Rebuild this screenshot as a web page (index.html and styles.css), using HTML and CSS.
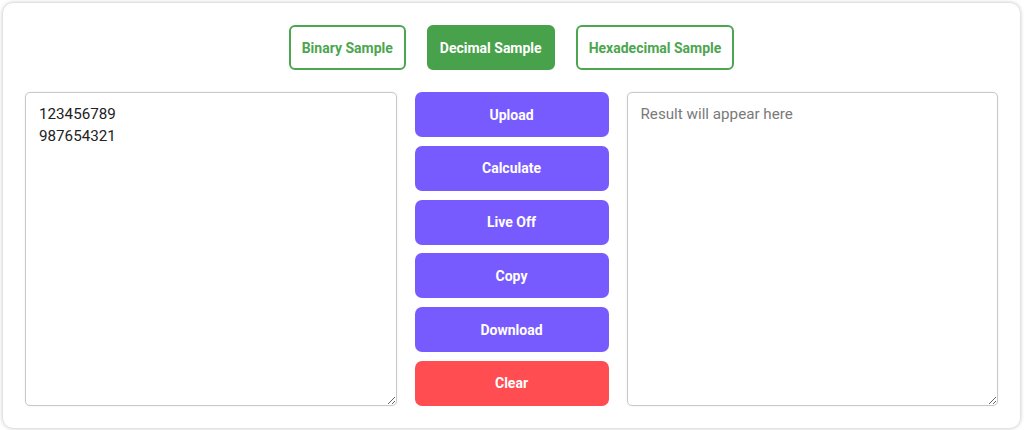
FILE: index.html
```html
<!DOCTYPE html>
<html lang="en">
<head>
<meta charset="utf-8">
<title>Converter</title>
<link rel="stylesheet" href="styles.css">
</head>
<body>
<div class="card">
  <div class="samples">
    <button class="sample">Binary Sample</button>
    <button class="sample active">Decimal Sample</button>
    <button class="sample">Hexadecimal Sample</button>
  </div>
  <div class="main">
    <textarea class="box">123456789
987654321</textarea>
    <div class="actions">
      <button class="act">Upload</button>
      <button class="act">Calculate</button>
      <button class="act">Live Off</button>
      <button class="act">Copy</button>
      <button class="act">Download</button>
      <button class="act clear">Clear</button>
    </div>
    <textarea class="box" placeholder="Result will appear here" readonly></textarea>
  </div>
</div>
</body>
</html>
```
FILE: styles.css
```css
* { box-sizing: border-box; }
html, body { margin: 0; background: #ffffff; }
body { padding: 3px 4px 2px 3px; font-family: Roboto, "Liberation Sans", sans-serif; }
.card {
  height: 425px;
  border-radius: 10px;
  background: #fff;
  box-shadow: 0 0 4px rgba(0, 0, 0, 0.28);
  padding: 22px 22px 22px 22px;
}
.samples {
  display: flex;
  justify-content: center;
  gap: 21px;
}
.sample {
  height: 45px;
  padding: 0 11px;
  border: 2px solid #4ca64f;
  border-radius: 6px;
  background: #fff;
  color: #4ca64f;
  font-family: Roboto, "Liberation Sans", sans-serif;
  font-weight: 700;
  font-size: 14px;
  cursor: pointer;
}
.sample.active {
  background: #48a14b;
  border-color: #48a14b;
  color: #fff;
}
.main {
  margin-top: 22px;
  display: grid;
  grid-template-columns: 1fr 194px 1fr;
  gap: 18px;
  height: 314px;
}
.box {
  width: 100%;
  height: 314px;
  border: 1px solid #c8c8c8;
  border-radius: 5px;
  box-shadow: 0 0 2px rgba(0, 0, 0, 0.08);
  padding: 10px 12px 10px 13px;
  font-family: Roboto, "Liberation Sans", sans-serif;
  font-size: 15.2px;
  line-height: 22px;
  color: #222;
  background: #fff;
  outline: none;
}
.box::placeholder { color: #7a7a7a; }
.actions {
  display: flex;
  flex-direction: column;
  justify-content: space-between;
}
.act {
  height: 45px;
  border: none;
  border-radius: 7px;
  background: #775bff;
  color: #fff;
  font-family: Roboto, "Liberation Sans", sans-serif;
  font-weight: 700;
  font-size: 14px;
  cursor: pointer;
}
.act.clear { background: #ff4d52; }
```
